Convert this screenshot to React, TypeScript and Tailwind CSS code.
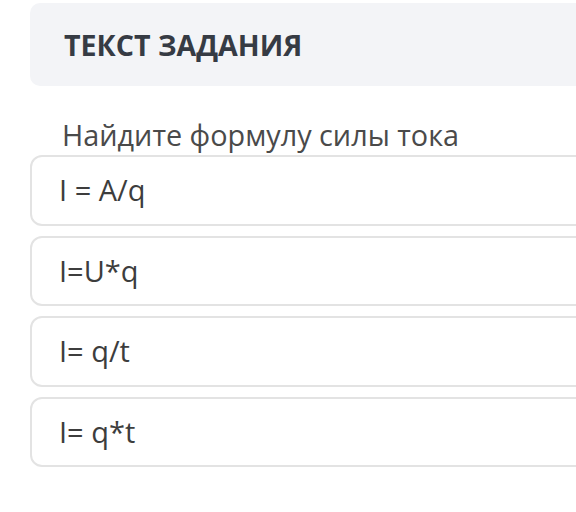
import React from 'react';

const options = ['I = A/q', 'I=U*q', 'I= q/t', 'I= q*t'];

export default function App() {
  return (
    <div
      className="w-[576px] h-[512px] overflow-hidden bg-white"
      style={{ fontFamily: '"Open Sans", "Noto Sans", sans-serif' }}
    >
      <div className="w-[620px] ml-[30px]">
        {/* Task header */}
        <div className="mt-[3px] h-[83px] rounded-[10px] bg-[#f3f4f7] pl-[34px] flex items-center">
          <span className="text-[28.6px] font-bold text-[#363b44] leading-[28px]">ТЕКСТ ЗАДАНИЯ</span>
        </div>

        {/* Question */}
        <div className="mt-[35px] pl-[32px] text-[28.8px] leading-[28px] text-[#4a4a4a]">
          Найдите формулу силы тока
        </div>

        {/* Answer options */}
        <div className="mt-[6px] flex flex-col gap-[10px]">
          {options.map((opt) => (
            <div
              key={opt}
              className="h-[70.5px] rounded-[12px] border-2 border-[#e3e3e3] pl-[27px] flex items-center"
            >
              <span className="text-[29px] leading-[28px] text-[#3d3d3d]">{opt}</span>
            </div>
          ))}
        </div>
      </div>
    </div>
  );
}
